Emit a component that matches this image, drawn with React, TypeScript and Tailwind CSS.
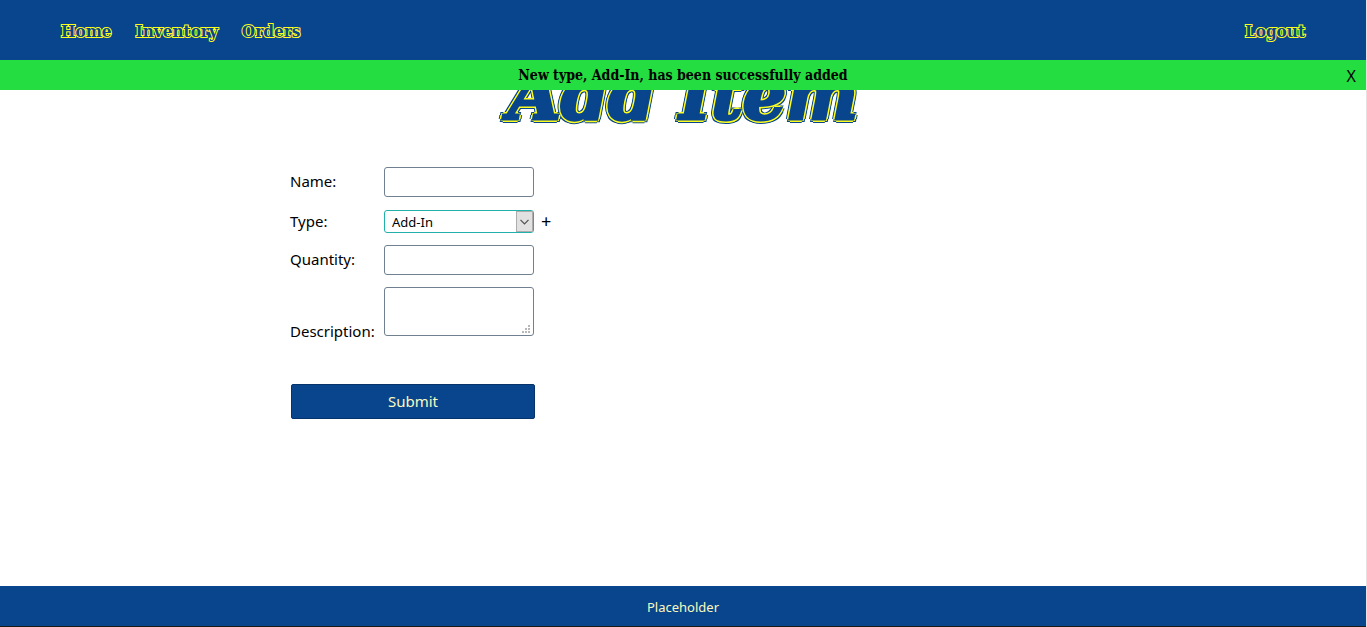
import { useState } from "react";

const navLink =
  "font-['DejaVu_Serif_Condensed','DejaVu_Serif',serif] text-[17px] font-bold leading-6 text-[#08458c] [-webkit-text-stroke:2px_#ffff1f] [paint-order:stroke_fill]";

const field = "w-[150px] rounded-[3px] border border-[#708090] bg-white px-2 text-sm outline-none";

const title =
  "h-[107px] text-center font-['DejaVu_Serif',serif] text-[68px] font-bold italic leading-[70px] text-[#08458c] [-webkit-text-stroke:3px_#08458c] [text-shadow:2px_2px_0_#ffff1f,-2px_2px_0_#ffff1f,2px_-2px_0_#ffff1f,-2px_-2px_0_#ffff1f,0_3px_0_#ffff1f,0_-3px_0_#ffff1f,3px_0_0_#ffff1f,-3px_0_0_#ffff1f,3px_3px_0_#08458c,-3px_3px_0_#08458c,3px_-3px_0_#08458c,-3px_-3px_0_#08458c,0_4px_0_#08458c,4px_0_0_#08458c,-4px_0_0_#08458c]";

export default function App() {
  const [showNotice, setShowNotice] = useState(true);

  return (
    <div className="flex min-h-screen flex-col border-r border-[#e3e3e3] bg-white font-['Noto_Sans',sans-serif] text-black">
      <header className="relative">
        <nav className="flex h-[60px] items-center gap-6 bg-[#08458c] px-[61px] pt-px">
          <a href="#home" className={navLink}>Home</a>
          <a href="#inventory" className={navLink}>Inventory</a>
          <a href="#orders" className={navLink}>Orders</a>
          <a href="#logout" className={`${navLink} ml-auto`}>Logout</a>
        </nav>
        {showNotice && (
          <div
            role="status"
            className="absolute inset-x-0 top-full z-10 flex h-[30px] items-center justify-center bg-[#24dd40]"
          >
            <p className="font-['DejaVu_Serif_Condensed','DejaVu_Serif',serif] text-sm font-bold">
              New type, Add-In, has been successfully added
            </p>
            <button
              type="button"
              aria-label="X"
              onClick={() => setShowNotice(false)}
              className="absolute right-[10px] top-1 text-base leading-6"
            >
              X
            </button>
          </div>
        )}
      </header>

      <main className="flex-1">
        <h1 className={title}>Add Item</h1>

        <form className="mx-auto w-full max-w-[786px] text-[15px] leading-[22px]" onSubmit={(e) => e.preventDefault()}>
          <div className="flex h-[30px] items-center">
            <label htmlFor="name" className="w-[94px] pb-0.5">Name:</label>
            <input id="name" type="text" className={`${field} h-[30px]`} />
          </div>

          <div className="mt-[13px] flex h-[23px] items-center">
            <label htmlFor="type" className="w-[94px] pb-0.5">Type:</label>
            <div className="relative">
              <select
                id="type"
                className="block h-[23px] w-[150px] appearance-none rounded-[3px] border border-[#20b2aa] bg-white pl-[7px] text-[13px] leading-5 outline-none"
              >
                <option>Add-In</option>
              </select>
              <span className="pointer-events-none absolute inset-y-px right-px flex w-[17px] items-center justify-center border border-[#adadad] bg-[#e1e1e1]">
                <svg width="9" height="6" viewBox="0 0 9 6" fill="none" stroke="#505050" strokeWidth="1.2">
                  <path d="M.5.8 4.5 4.8 8.5.8" />
                </svg>
              </span>
            </div>
            <button type="button" className="ml-[7px] pb-0.5 text-lg leading-6">+</button>
          </div>

          <div className="mt-3 flex h-[30px] items-center">
            <label htmlFor="quantity" className="w-[94px] pb-0.5">Quantity:</label>
            <input id="quantity" type="text" className={`${field} h-[30px]`} />
          </div>

          <div className="mt-3 flex h-[57px] items-start">
            <label htmlFor="description" className="w-[94px] self-end pb-0.5">Description:</label>
            <div className="relative">
              <textarea id="description" className={`${field} block h-[49px] resize-none`} />
              <svg
                className="pointer-events-none absolute bottom-[3px] right-1"
                width="8"
                height="8"
                viewBox="0 0 8 8"
                fill="#b8b8b8"
              >
                <path d="M6 0h2v2H6zM3 3h2v2H3zM6 3h2v2H6zM0 6h2v2H0zM3 6h2v2H3zM6 6h2v2H6z" />
              </svg>
            </div>
          </div>

          <button
            type="submit"
            className="ml-px mt-10 block h-[35px] w-[244px] rounded-[2px] border border-[#06346a] bg-[#08458c] pb-0.5 text-[15px] text-[#fafac0]"
          >
            Submit
          </button>
        </form>
      </main>

      <footer className="flex h-[41px] items-center justify-center border-b border-[#1a1a1a] bg-[#08458c] pt-[3px] text-[13px] text-[#fafac0]">
        Placeholder
      </footer>
    </div>
  );
}
